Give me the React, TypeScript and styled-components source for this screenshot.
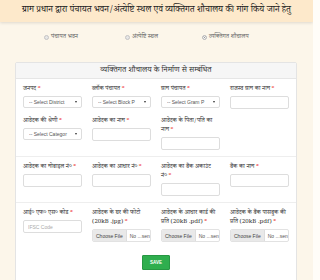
import React from 'react';
import styled, { createGlobalStyle } from 'styled-components';

const GlobalStyle = createGlobalStyle`
  html, body {
    margin: 0;
    padding: 0;
    background: #fffdf8;
  }
  body {
    font-family: "Noto Serif Devanagari", "Noto Sans Devanagari", "Lohit Devanagari", "FreeSerif", "Liberation Serif", serif;
    color: #333;
  }
  * {
    box-sizing: border-box;
  }
`;

type Field = {
  label: string;
  kind: 'select' | 'input' | 'file' | 'empty';
  text?: string;
  placeholder?: string;
};

const rows: Field[][] = [
  [
    { label: 'जनपद', kind: 'select', text: '-- Select District' },
    { label: 'ब्लॉक पंचायत', kind: 'select', text: '-- Select Block P' },
    { label: 'ग्राम पंचायत', kind: 'select', text: '-- Select Gram P' },
    { label: 'राजस्व ग्राम का नाम', kind: 'input' },
    { label: 'आवेदक की श्रेणी', kind: 'select', text: '-- Select Categor' },
    { label: 'आवेदक का नाम', kind: 'input' },
    { label: 'आवेदक के पिता/पति का नाम', kind: 'input' },
    { label: '', kind: 'empty' }
  ],
  [
    { label: 'आवेदक का मोबाइल नं०', kind: 'input' },
    { label: 'आवेदक का आधार नं०', kind: 'input' },
    { label: 'आवेदक का बैंक अकाउंट नं०', kind: 'input' },
    { label: 'बैंक का नाम', kind: 'input' }
  ],
  [
    { label: 'आई० एफ० एस० कोड', kind: 'input', placeholder: 'IFSC Code' },
    { label: 'आवेदक के घर की फोटो (20kB .jpg)', kind: 'file' },
    { label: 'आवेदक के आधार कार्ड की प्रति (20kB .pdf)', kind: 'file' },
    { label: 'आवेदक के बैंक पासबुक की प्रति (20kB .pdf)', kind: 'file' }
  ]
];

const radios = [
  { label: 'पंचायत भवन', checked: false },
  { label: 'अंत्येष्टि स्थल', checked: false },
  { label: 'व्यक्तिगत शौचालय', checked: true }
];

const renderControl = (f: Field) => {
  if (f.kind === 'select') {
    return (
      <SelectWrap>
        <Select defaultValue="">
          <option value="">{f.text}</option>
        </Select>
      </SelectWrap>
    );
  }
  if (f.kind === 'file') {
    return (
      <FileBox>
        <FileButton>Choose File</FileButton>
        <FileName>No ...sen</FileName>
      </FileBox>
    );
  }
  if (f.kind === 'input') {
    return <Input placeholder={f.placeholder} />;
  }
  return null;
};

const App: React.FC = () => {
  return <>
    <GlobalStyle />
    <Page>
      <Banner>ग्राम प्रधान द्वारा पंचायत भवन/अंत्येष्टि स्थल एवं व्यक्तिगत शौचालय की मांग किये जाने हेतु</Banner>
      <RadioRow>
        {radios.map(r => (
          <RadioItem key={r.label}>
            <RadioDot checked={r.checked} />
            {r.label}
          </RadioItem>
        ))}
      </RadioRow>
      <Card>
        <CardHeader>व्यक्तिगत शौचालय के निर्माण से सम्बंधित</CardHeader>
        {rows.map((row, i) => (
          <Section key={i}>
            {row.map((f, j) => (
              <Cell key={j}>
                {f.label && (
                  <Label>
                    {f.label}
                    <Req>*</Req>
                  </Label>
                )}
                {renderControl(f)}
              </Cell>
            ))}
          </Section>
        ))}
        <Actions>
          <SaveButton type="button">SAVE</SaveButton>
        </Actions>
      </Card>
    </Page>
  </>;
};

export default App;

const Page = styled.div`
  width: 313px;
  min-height: 280px;
  background: #fcf6ea;
  overflow: hidden;
`;

const Banner = styled.div`
  height: 22px;
  background: #fde9cb;
  box-shadow: 0 1px 3px rgba(0, 0, 0, 0.12);
  display: flex;
  align-items: center;
  justify-content: center;
  font-size: 9px;
  color: #222;
  white-space: nowrap;
`;

const RadioRow = styled.div`
  display: grid;
  grid-template-columns: 81px 77px auto;
  align-items: start;
  padding: 11px 0 0 44px;
  height: 40px;
  font-size: 6.2px;
  color: #666;
`;

const RadioItem = styled.label`
  display: flex;
  align-items: center;
  gap: 2px;
  line-height: 8px;
`;

const RadioDot = styled.span<{ checked: boolean }>`
  width: 5px;
  height: 5px;
  border-radius: 50%;
  border: 1px solid #c4c4c4;
  background: ${p => (p.checked ? '#777' : '#e6e6e6')};
  box-shadow: ${p => (p.checked ? 'inset 0 0 0 1px #fff' : 'none')};
`;

const Card = styled.div`
  margin: 0 16px 0 15px;
  background: #fff;
  border: 1px solid #e4e4e4;
  border-radius: 2px;
`;

const CardHeader = styled.div`
  height: 16px;
  background: #f6f6f6;
  border-bottom: 1px solid #e6e6e6;
  display: flex;
  align-items: center;
  justify-content: center;
  font-size: 8px;
  color: #333;
`;

const Section = styled.div`
  display: grid;
  grid-template-columns: repeat(4, 59px);
  column-gap: 10px;
  row-gap: 8px;
  padding: 6px 7px 6px;
  & + & {
    border-top: 1px solid #eee;
  }
`;

const Cell = styled.div`
  display: flex;
  flex-direction: column;
  gap: 2px;
`;

const Label = styled.div`
  font-size: 6.1px;
  line-height: 9px;
  color: #333;
`;

const Req = styled.span`
  color: #e33;
  margin-left: 1px;
`;

const SelectWrap = styled.div`
  position: relative;
  display: flex;
  &::after {
    content: '';
    position: absolute;
    right: 5px;
    top: 5px;
    border-left: 1.5px solid transparent;
    border-right: 1.5px solid transparent;
    border-top: 2px solid #333;
  }
`;

const Select = styled.select`
  display: block;
  appearance: none;
  width: 59px;
  height: 12px;
  margin: 0;
  padding: 0 0 0 5px;
  border: 1px solid #ddd;
  border-radius: 2px;
  background: #fff;
  font-family: "Liberation Sans", Arial, sans-serif;
  font-size: 5px;
  color: #555;
  outline: none;
`;

const Input = styled.input`
  display: block;
  width: 59px;
  height: 13px;
  margin: 0;
  padding: 0 4px;
  border: 1px solid #ddd;
  border-radius: 2px;
  background: #fff;
  font-family: "Liberation Sans", Arial, sans-serif;
  font-size: 5px;
  color: #555;
  outline: none;
  &::placeholder {
    color: #aaa;
  }
`;

const FileBox = styled.div`
  display: flex;
  align-items: center;
  width: 59px;
  height: 13px;
  border: 1px solid #e2e2e2;
  border-radius: 2px;
  font-family: "Liberation Sans", Arial, sans-serif;
  font-size: 5px;
  color: #555;
  overflow: hidden;
`;

const FileButton = styled.span`
  height: 100%;
  display: flex;
  align-items: center;
  padding: 0 3px;
  background: #e9e9e9;
  border-right: 1px solid #ddd;
  color: #444;
`;

const FileName = styled.span`
  padding-left: 3px;
  white-space: nowrap;
`;

const Actions = styled.div`
  display: flex;
  justify-content: center;
  padding: 7px 0 20px;
`;

const SaveButton = styled.button`
  width: 28px;
  height: 15px;
  padding: 0;
  background: #2fae4e;
  border: 1px solid #279743;
  border-radius: 1px;
  color: #fff;
  font-family: "Liberation Sans", Arial, sans-serif;
  font-size: 4.5px;
  font-weight: bold;
`;
